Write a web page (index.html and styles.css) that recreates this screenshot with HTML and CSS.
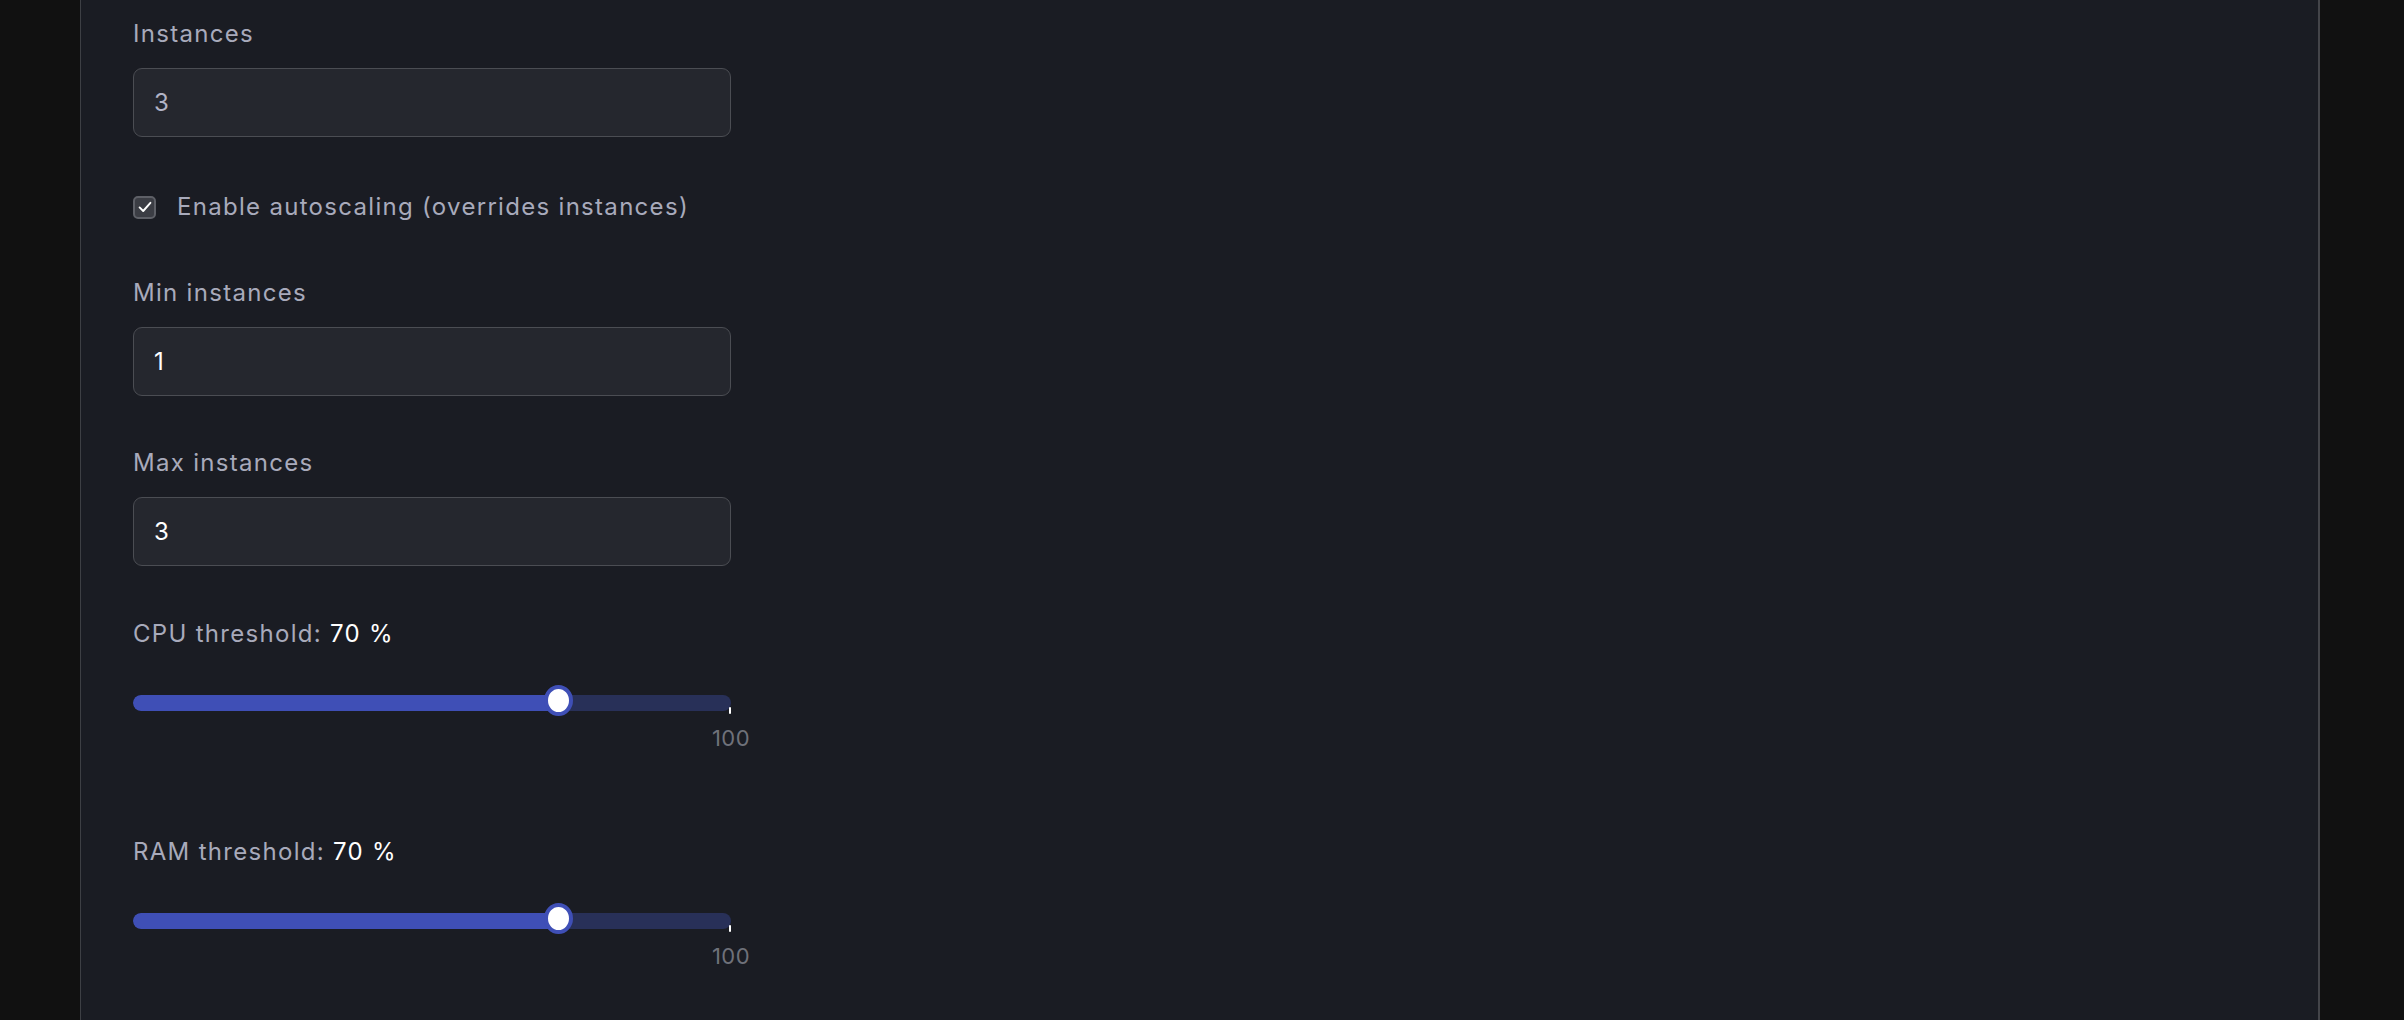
FILE: index.html
```html
<!DOCTYPE html>
<html lang="en">
<head>
<meta charset="utf-8">
<title>Scaling settings</title>
<link rel="stylesheet" href="styles.css">
</head>
<body>
<div class="page">
  <main class="panel">
    <form class="form">
      <div class="field">
        <label class="label" for="instances">Instances</label>
        <input class="input input-muted" id="instances" type="text" value="3" readonly>
      </div>

      <label class="check-row">
        <span class="checkbox">
          <svg viewBox="0 0 16 16" width="16" height="16" aria-hidden="true">
            <path d="M2.6 8.4 L6.2 12 L13.4 3.8" fill="none" stroke="#ffffff" stroke-width="1.9" stroke-linecap="round" stroke-linejoin="round"/>
          </svg>
        </span>
        <span class="check-text">Enable autoscaling (overrides instances)</span>
      </label>

      <div class="field field-min">
        <label class="label" for="min">Min instances</label>
        <input class="input" id="min" type="text" value="1">
      </div>

      <div class="field field-max">
        <label class="label" for="max">Max instances</label>
        <input class="input" id="max" type="text" value="3">
      </div>

      <div class="slider-field slider-cpu">
        <div class="label">CPU threshold: <span class="value">70 %</span></div>
        <div class="slider">
          <div class="rail"><div class="fill" style="width: 71%"></div></div>
          <span class="thumb" style="left: 71%"></span>
          <span class="tick"></span>
        </div>
        <div class="marks"><span class="mark-label">100</span></div>
      </div>

      <div class="slider-field slider-ram">
        <div class="label">RAM threshold: <span class="value">70 %</span></div>
        <div class="slider">
          <div class="rail"><div class="fill" style="width: 71%"></div></div>
          <span class="thumb" style="left: 71%"></span>
          <span class="tick"></span>
        </div>
        <div class="marks"><span class="mark-label">100</span></div>
      </div>
    </form>
  </main>
</div>
</body>
</html>
```

FILE: styles.css
```css
* {
  box-sizing: border-box;
}

html, body {
  margin: 0;
  padding: 0;
  height: 100%;
  overflow: hidden;
  background: #111111;
}

body {
  font-family: Inter, "Noto Sans", sans-serif;
  font-size: 24px;
  line-height: 36px;
  letter-spacing: 1.3px;
  color: #a8aabb;
}

.page {
  height: 100%;
  padding-left: 80px;
}

.panel {
  width: 2240px;
  height: 100%;
  background: #1a1c23;
  border-left: 1px solid #3d3f44;
  border-right: 2px solid #434449;
  padding: 16px 0 0 52px;
}

.form {
  width: 598px;
  display: flex;
  flex-direction: column;
}

.field {
  display: flex;
  flex-direction: column;
  gap: 16px;
}

.label {
  display: block;
  color: #a8aabb;
  font-size: 24px;
  line-height: 36px;
  white-space: nowrap;
}

.value {
  color: #ffffff;
}

.input {
  display: block;
  width: 100%;
  height: 69px;
  margin: 0;
  padding: 0 20px;
  background: #25272e;
  border: 1px solid #4b4d53;
  border-radius: 9px;
  color: #ffffff;
  font-family: Inter, "Noto Sans", sans-serif;
  font-size: 24px;
  letter-spacing: 1.3px;
  outline: none;
}

.input-muted {
  color: #b2b4c6;
}

.check-row {
  display: flex;
  align-items: center;
  gap: 21px;
  height: 36px;
  margin-top: 52px;
  color: #a8aabb;
  white-space: nowrap;
}

.checkbox {
  width: 23px;
  height: 23px;
  flex: none;
  display: flex;
  align-items: center;
  justify-content: center;
  background: #3b3d44;
  border: 2px solid #5e6067;
  border-radius: 5px;
}

.field-min {
  margin-top: 50px;
}

.field-max {
  margin-top: 49px;
}

.slider-cpu {
  margin-top: 50px;
}

.slider-ram {
  margin-top: 81px;
}

.slider {
  position: relative;
  height: 32px;
  padding-top: 10px;
  margin-top: 33px;
}

.rail {
  height: 16px;
  border-radius: 8px;
  background: #283058;
  overflow: hidden;
}

.fill {
  height: 100%;
  background: #3f4fb6;
  border-radius: 8px 0 0 8px;
}

.thumb {
  position: absolute;
  top: 0;
  width: 29px;
  height: 31px;
  margin-left: -14px;
  border-radius: 50%;
  background: #ffffff;
  border: 4px solid #3f4fb6;
}

.tick {
  position: absolute;
  right: 0;
  top: 22px;
  width: 2px;
  height: 7px;
  background: #ffffff;
  border-radius: 1px;
}

.marks {
  display: flex;
  justify-content: flex-end;
  margin-top: 6px;
  height: 30px;
}

.mark-label {
  font-size: 22px;
  line-height: 30px;
  letter-spacing: 0.5px;
  color: #6f717a;
  transform: translateX(50%);
}
```
